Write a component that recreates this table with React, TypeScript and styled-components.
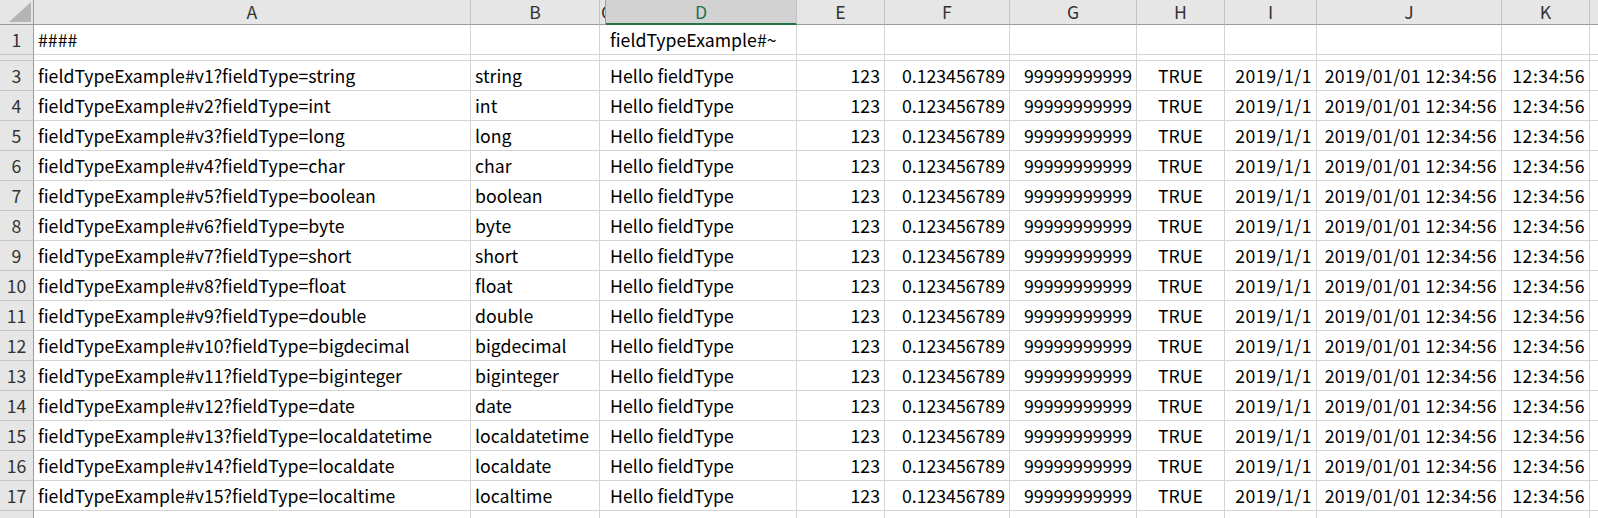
import React from "react";
import styled, { createGlobalStyle, css } from "styled-components";

const GlobalStyle = createGlobalStyle`
  html, body {
    margin: 0;
    padding: 0;
    background: #ffffff;
    overflow: hidden;
  }
  body {
    font-family: "Noto Sans CJK JP", "Noto Sans", sans-serif;
  }
`;

const COLS = [
  { key: "A", width: 437 },
  { key: "B", width: 129 },
  { key: "C", width: 6 },
  { key: "D", width: 191 },
  { key: "E", width: 88 },
  { key: "F", width: 125 },
  { key: "G", width: 127 },
  { key: "H", width: 88 },
  { key: "I", width: 92 },
  { key: "J", width: 185 },
  { key: "K", width: 88 },
  { key: "L", width: 0 },
];

const TYPES = [
  "string",
  "int",
  "long",
  "char",
  "boolean",
  "byte",
  "short",
  "float",
  "double",
  "bigdecimal",
  "biginteger",
  "date",
  "localdatetime",
  "localdate",
  "localtime",
];

const Sheet = styled.div`
  display: grid;
  grid-template-columns: 34px ${COLS.filter((c) => c.width > 0)
      .map((c) => `${c.width}px`)
      .join(" ")} 1fr;
  grid-template-rows: 25px 30px 6px repeat(16, 30px);
  width: 1598px;
  height: 518px;
  overflow: hidden;
  font-family: "Noto Sans CJK JP", "Noto Sans", sans-serif;
  font-size: 17.7px;
  color: #000;
`;

const Corner = styled.div`
  box-sizing: border-box;
  background: #e6e6e6;
  border-right: 1px solid #9b9b9b;
  border-bottom: 1px solid #9b9b9b;
  display: flex;
  align-items: flex-end;
  justify-content: flex-end;
  padding: 0 2px 2px 0;
`;

const ColHeader = styled.div<{ $selected?: boolean }>`
  box-sizing: border-box;
  background: #e6e6e6;
  border-right: 1px solid #c4c4c4;
  border-bottom: 1px solid #9b9b9b;
  color: #333;
  font-size: 17.7px;
  line-height: 23px;
  display: flex;
  justify-content: center;
  align-items: flex-start;
  white-space: nowrap;
  ${(p) =>
    p.$selected &&
    css`
      background: #d2d2d2;
      color: #217346;
      border-bottom: 2px solid #217346;
    `}
`;

const NarrowHeader = styled(ColHeader)`
  justify-content: flex-start;
  padding-left: 1px;
  border-right-color: #9b9b9b;
  overflow: hidden;
`;

const RowHeader = styled.div`
  box-sizing: border-box;
  background: #e6e6e6;
  border-right: 1px solid #9b9b9b;
  border-bottom: 1px solid #c4c4c4;
  color: #333;
  line-height: 24px;
  display: flex;
  justify-content: center;
  align-items: flex-start;
  padding-top: 2px;
  overflow: hidden;
`;

const Cell = styled.div<{ $align?: "left" | "right" | "center"; $tracking?: number }>`
  box-sizing: border-box;
  border-right: 1px solid #d4d4d4;
  border-bottom: 1px solid #d4d4d4;
  background: #fff;
  line-height: 24px;
  padding: 2px 4px 0 4px;
  white-space: nowrap;
  overflow: hidden;
  text-align: ${(p) => p.$align ?? "left"};
  letter-spacing: ${(p) => p.$tracking ?? 0}px;
`;

const CornerMark = () => (
  <svg width="22" height="20" viewBox="0 0 22 20">
    <polygon points="0,20 22,20 22,0" fill="#b4b4b4" />
  </svg>
);

type Row = { num: number; height?: "hidden"; values: (string | undefined)[] };

const rows: Row[] = [
  {
    num: 1,
    values: ["####", "", "", "fieldTypeExample#~", "", "", "", "", "", "", "", ""],
  },
  { num: 2, height: "hidden", values: Array(12).fill("") },
  ...TYPES.map((t, i) => ({
    num: i + 3,
    values: [
      `fieldTypeExample#v${i + 1}?fieldType=${t}`,
      t,
      "",
      "Hello fieldType",
      "123",
      "0.123456789",
      "99999999999",
      "TRUE",
      "2019/1/1",
      "2019/01/01 12:34:56",
      "12:34:56",
      "",
    ],
  })),
  { num: 18, values: Array(12).fill("") },
];

const alignFor = (col: string, rowNum: number): "left" | "right" | "center" => {
  if (rowNum < 3) return "left";
  if (["E", "F", "G", "I", "J", "K"].includes(col)) return "right";
  if (col === "H") return "center";
  return "left";
};

const trackingFor = (col: string): number => {
  if (col === "I" || col === "K") return 0.5;
  if (col === "J") return 0.38;
  return 0;
};

export default function App() {
  return (
    <>
      <GlobalStyle />
      <Sheet>
        <Corner>
          <CornerMark />
        </Corner>
        {COLS.map((c) =>
          c.key === "C" ? (
            <NarrowHeader key={c.key}>C</NarrowHeader>
          ) : (
            <ColHeader key={c.key} $selected={c.key === "D"}>
              {c.key === "L" ? "" : c.key}
            </ColHeader>
          )
        )}
        {rows.map((r) => (
          <React.Fragment key={r.num}>
            <RowHeader>{r.height === "hidden" ? "" : r.num}</RowHeader>
            {COLS.map((c, ci) => (
              <Cell
                key={c.key}
                $align={alignFor(c.key, r.num)}
                $tracking={trackingFor(c.key)}
              >
                {r.height === "hidden" ? "" : r.values[ci]}
              </Cell>
            ))}
          </React.Fragment>
        ))}
      </Sheet>
    </>
  );
}
